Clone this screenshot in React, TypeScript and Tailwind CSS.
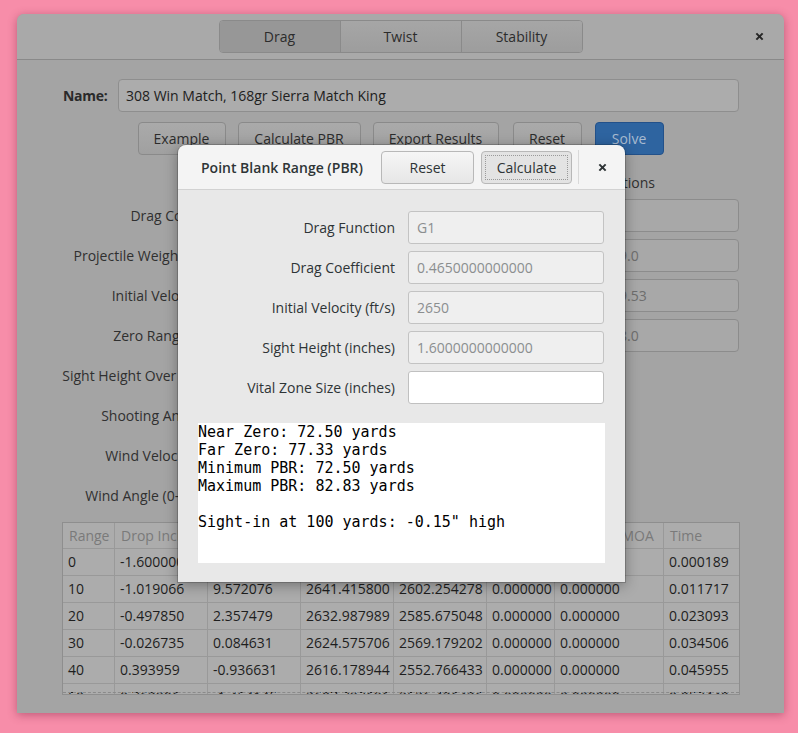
import React from "react";

const leftRows = [
  "Drag Coefficient",
  "Projectile Weight (grains)",
  "Initial Velocity (ft/s)",
  "Zero Range (yards)",
  "Sight Height Over Bore (in)",
  "Shooting Angle (deg)",
  "Wind Velocity (mph)",
  "Wind Angle (0-360 deg)",
];
const leftVals = ["0.465", "168", "2650", "100", "1.6", "0", "0", "0"];
const rightRows = [
  { label: "Altitude (feet)", value: "0" },
  { label: "Temperature (F)", value: "59.0" },
  { label: "Pressure (inHg)", value: "29.53" },
  { label: "Humidity (%)", value: "78.0" },
];

const headers = ["Range", "Drop Inches", "Drop MOA", "Velocity", "Velocity X", "Windage", "Windage MOA", "Time"];
const rows = [
  ["0", "-1.600000", "-inf", "2650.000000", "2650.000000", "0.000000", "0.000000", "0.000189"],
  ["10", "-1.019066", "9.572076", "2641.415800", "2602.254278", "0.000000", "0.000000", "0.011717"],
  ["20", "-0.497850", "2.357479", "2632.987989", "2585.675048", "0.000000", "0.000000", "0.023093"],
  ["30", "-0.026735", "0.084631", "2624.575706", "2569.179202", "0.000000", "0.000000", "0.034506"],
  ["40", "0.393959", "-0.936631", "2616.178944", "2552.766433", "0.000000", "0.000000", "0.045955"],
  ["50", "0.763906", "-1.454145", "2607.797696", "2536.436436", "0.000000", "0.000000", "0.057440"],
];

function XIcon({ color, size = 9 }: { color: string; size?: number }) {
  return (
    <svg width={size} height={size} viewBox="0 0 10 10">
      <path d="M1.5 1.5 L8.5 8.5 M8.5 1.5 L1.5 8.5" stroke={color} strokeWidth="2.2" strokeLinecap="butt" />
    </svg>
  );
}

export default function App() {
  const mainBtn =
    "h-[33px] flex items-center justify-center rounded-[4px] border border-[#8a8a8a] bg-gradient-to-b from-[#aaaaaa] to-[#a0a0a0] text-[#2c2c2c]";
  const dlgInput =
    "h-[33px] rounded-[3px] border border-[#c3c3c3] bg-[#efefef] px-[8px] flex items-center text-[#8b8e8f]";
  return (
    <div className="w-[798px] h-[733px] bg-[#f78da9] pt-[14px] pl-[17px] relative overflow-hidden font-['Open_Sans','Noto_Sans',sans-serif] text-[14px]">
      {/* Main window (dimmed) */}
      <div className="w-[767px] h-[699px] rounded-t-[7px] bg-[#a4a4a4] shadow-[0_2px_10px_rgba(120,30,60,0.45)] flex flex-col overflow-hidden">
        {/* header bar */}
        <div className="h-[46px] bg-[#a9a9a9] border-b border-[#898989] flex items-center">
          <div className="flex-1" />
          <div className="flex h-[33px] rounded-[4px] border border-[#8a8a8a] overflow-hidden text-[#2c2c2c]">
            <div className="w-[121px] flex items-center justify-center bg-[#979797] border-r border-[#8a8a8a]">Drag</div>
            <div className="w-[121px] flex items-center justify-center bg-gradient-to-b from-[#a6a6a6] to-[#9d9d9d] border-r border-[#8a8a8a]">Twist</div>
            <div className="w-[120px] flex items-center justify-center bg-gradient-to-b from-[#a6a6a6] to-[#9d9d9d]">Stability</div>
          </div>
          <div className="flex-1 flex justify-end">
            <div className="pr-[20px] flex items-center">
              <XIcon color="#262626" size={9} />
            </div>
          </div>
        </div>

        {/* body */}
        <div className="px-[45px] flex flex-col">
          <div className="mt-[19px] flex items-center">
            <span className="ml-[1px] w-[42px] font-bold text-[#2a2a2a] tracking-[-0.3px]">Name:</span>
            <div className="ml-[13px] flex-1 h-[33px] rounded-[4px] border border-[#8e8e8e] bg-[#acacac] flex items-center px-[7px] text-[#202020]">
              308 Win Match, 168gr Sierra Match King
            </div>
          </div>

          <div className="mt-[10px] flex justify-center">
            <div className={`${mainBtn} w-[88px]`}>Example</div>
            <div className={`${mainBtn} w-[123px] ml-[12px]`}>Calculate PBR</div>
            <div className={`${mainBtn} w-[126px] ml-[12px]`}>Export Results</div>
            <div className={`${mainBtn} w-[69px] ml-[14px]`}>Reset</div>
            <div className="h-[33px] w-[69px] ml-[13px] flex items-center justify-center rounded-[4px] border border-[#23518a] bg-[#2e64a0] text-[#a9bbd0]">
              Solve
            </div>
          </div>

          <div className="mt-[17px] grid grid-cols-[173px_180px_150px_138px] gap-x-[12px] gap-y-[7px] text-[#303030]">
            <div className="col-span-2 h-[20px]" />
            <div className="col-span-2 h-[20px] flex items-center justify-end pr-[84px]">Atmospheric Conditions</div>
            {leftRows.map((l, i) => (
              <React.Fragment key={l}>
                <div className="h-[33px] flex items-center justify-end whitespace-nowrap">{l}</div>
                <div className="h-[33px] rounded-[4px] border border-[#8c8c8c] bg-[#a8a8a8] px-[7px] flex items-center text-[#6e6e6e]">
                  {leftVals[i]}
                </div>
                {i < 4 ? (
                  <>
                    <div className="h-[33px] flex items-center justify-end whitespace-nowrap">{rightRows[i].label}</div>
                    <div className="h-[33px] rounded-[4px] border border-[#8c8c8c] bg-[#a8a8a8] px-[9px] flex items-center text-[#6e6e6e]">
                      {rightRows[i].value}
                    </div>
                  </>
                ) : (
                  <div className="col-span-2" />
                )}
              </React.Fragment>
            ))}
          </div>

          {/* table */}
          <div className="mt-[10px] w-[678px] h-[173px] border border-[#8e8e8e] bg-[#acacac] overflow-hidden relative">
            <div className="grid grid-cols-[52px_93px_93px_93px_93px_68px_109px_75px] h-[26px] border-b border-[#999999]">
              {headers.map((h, i) => (
                <div
                  key={h}
                  className={`flex items-center pl-[6px] whitespace-nowrap overflow-hidden text-[#7a7a7a] ${i < 7 ? "border-r border-[#999999]" : ""}`}
                >
                  {h}
                </div>
              ))}
            </div>
            {rows.map((r) => (
              <div key={r[0]} className="grid grid-cols-[52px_93px_93px_93px_93px_68px_109px_75px] h-[27px] border-b border-[#999999]">
                {r.map((c, i) => (
                  <div
                    key={i}
                    className={`flex items-center pl-[5px] pb-[1px] whitespace-nowrap overflow-hidden text-[#1e1e1e] ${i < 7 ? "border-r border-[#999999]" : ""}`}
                  >
                    {c}
                  </div>
                ))}
              </div>
            ))}
            <div className="absolute left-0 right-0 bottom-[1px] border-t border-dashed border-[#8a8a8a]" />
          </div>
        </div>
      </div>

      {/* PBR dialog */}
      <div className="absolute left-[178px] top-[145px] w-[447px] rounded-t-[8px] overflow-hidden shadow-[0_0_0_1px_rgba(0,0,0,0.18),0_3px_14px_rgba(0,0,0,0.35)] flex flex-col text-[#2e3436]">
        <div className="h-[45px] bg-[#f4f4f4] border-b border-[#d2d2d2] flex items-center">
          <div className="flex-1 pl-[23px] font-semibold">Point Blank Range (PBR)</div>
          <div className="w-[93px] h-[33px] rounded-[4px] border border-[#b8b8b8] bg-gradient-to-b from-[#f6f6f6] to-[#e6e6e6] flex items-center justify-center">
            Reset
          </div>
          <div className="ml-[7px] w-[91px] h-[33px] rounded-[4px] border border-[#b8b8b8] bg-[#e3e3e3] p-[3px]">
            <div className="w-full h-full border border-dotted border-[#9a9a9a] flex items-center justify-center">Calculate</div>
          </div>
          <div className="ml-[6px] w-px h-[34px] bg-[#d9d9d9]" />
          <div className="w-[46px] flex items-center justify-center">
            <XIcon color="#2e3436" size={9} />
          </div>
        </div>
        <div className="bg-[#e8e8e8] px-[20px] pt-[21px] pb-[19px] flex flex-col">
          <div className="grid grid-cols-[197px_196px] gap-x-[13px] gap-y-[7px]">
            <div className="h-[33px] flex items-center justify-end">Drag Function</div>
            <div className={dlgInput}>G1</div>
            <div className="h-[33px] flex items-center justify-end">Drag Coefficient</div>
            <div className={dlgInput}>0.4650000000000</div>
            <div className="h-[33px] flex items-center justify-end">Initial Velocity (ft/s)</div>
            <div className={dlgInput}>2650</div>
            <div className="h-[33px] flex items-center justify-end">Sight Height (inches)</div>
            <div className={dlgInput}>1.6000000000000</div>
            <div className="h-[33px] flex items-center justify-end">Vital Zone Size (inches)</div>
            <div className="h-[33px] rounded-[3px] border border-[#c0c0c0] bg-white" />
          </div>
          <div className="mt-[19px] h-[140px] bg-white text-black font-['DejaVu_Sans_Mono',monospace] text-[15px] leading-[18px] whitespace-pre">
            {"Near Zero: 72.50 yards\nFar Zero: 77.33 yards\nMinimum PBR: 72.50 yards\nMaximum PBR: 82.83 yards\n\nSight-in at 100 yards: -0.15\" high"}
          </div>
        </div>
      </div>
    </div>
  );
}
